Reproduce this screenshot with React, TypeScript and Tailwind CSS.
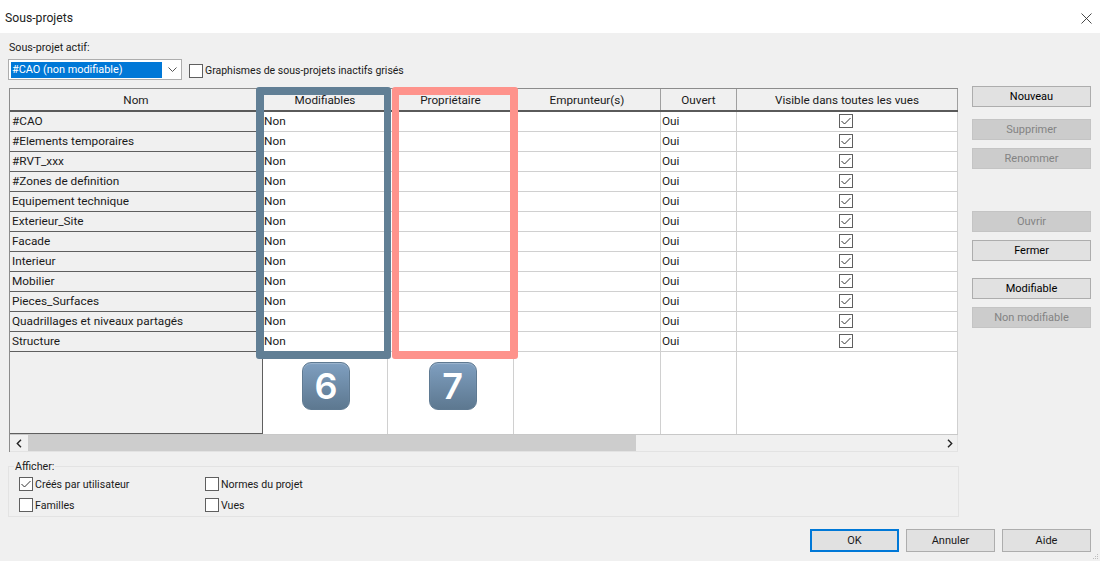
const rows = [
  "#CAO",
  "#Elements temporaires",
  "#RVT_xxx",
  "#Zones de definition",
  "Equipement technique",
  "Exterieur_Site",
  "Facade",
  "Interieur",
  "Mobilier",
  "Pieces_Surfaces",
  "Quadrillages et niveaux partagés",
  "Structure",
]

const headers = ["Nom", "Modifiables", "Propriétaire", "Emprunteur(s)", "Ouvert", "Visible dans toutes les vues"]
const gridCols = "grid grid-cols-[253px_125px_126px_147px_76px_221px] grid-rows-1"

function Check({ checked }: { checked?: boolean }) {
  return (
    <span className="flex h-[14px] w-[14px] shrink-0 items-center justify-center border border-[#5f5f5f] bg-white">
      {checked && (
        <svg width="10" height="10" viewBox="0 0 10 10" fill="none" stroke="#333" strokeWidth="1">
          <path d="M0.5 5 L3.5 8 L9.5 2" />
        </svg>
      )}
    </span>
  )
}

function SideButton({ label, disabled, className = "" }: { label: string; disabled?: boolean; className?: string }) {
  return (
    <div
      className={`flex h-[21px] items-center justify-center border text-[11px] ${
        disabled ? "border-[#c4c4c4] bg-[#cccccc] text-[#838383]" : "border-[#adadad] bg-[#e1e1e1] text-black"
      } ${className}`}
    >
      {label}
    </div>
  )
}

function Keycap({ n, className = "" }: { n: string; className?: string }) {
  return (
    <div
      className={`flex h-[48px] w-[48px] items-center justify-center rounded-[9px] border border-[#5f7a92] bg-gradient-to-b from-[#7f9fc0] to-[#5d7890] font-['Inter',sans-serif] text-[36px] leading-none font-semibold text-white shadow-[inset_0_1px_1px_rgba(255,255,255,0.25)] ${className}`}
    >
      {n}
    </div>
  )
}

export default function App() {
  return (
    <div className="relative flex h-[561px] w-[1100px] flex-col overflow-hidden bg-[#f0f0f0] font-['Roboto',sans-serif] text-[12px] leading-[15px] text-[#1a1a1a]">
      <div className="flex h-[33px] shrink-0 items-center justify-between bg-white pt-[4px] pr-[8px] pl-[5px]">
        <span className="text-[12.2px] text-[#222]">Sous-projets</span>
        <svg width="11" height="11" viewBox="0 0 11 11" stroke="#333" strokeWidth="0.9">
          <path d="M0.5 0.5 L10.5 10.5 M10.5 0.5 L0.5 10.5" />
        </svg>
      </div>

      <div className="flex-1">
        <div className="flex pt-[5px] pl-[9px]">
          <div className="w-[949px]">
            <div className="h-[18px] pt-px text-[10.7px] leading-[18px]">Sous-projet actif:</div>
            <div className="mt-[3px] flex h-[21px] items-center">
              <div className="-ml-px flex h-[21px] w-[174px] items-center border border-[#adadad] bg-white pl-[2px]">
                <div className="flex h-[16px] w-[151px] items-center bg-[#0078d7] pl-[1px] text-[10.9px] text-white">
                  #CAO (non modifiable)
                </div>
                <svg className="ml-[6px]" width="9" height="6" viewBox="0 0 9 6" fill="none" stroke="#555">
                  <path d="M0.5 0.5 L4.5 4.5 L8.5 0.5" />
                </svg>
              </div>
              <div className="ml-[7px] flex items-center gap-[2px] pt-[2px]">
                <Check />
                <span className="text-[10.5px]">Graphismes de sous-projets inactifs grisés</span>
              </div>
            </div>

            <div className="relative mt-[8px] w-[949px] border-t border-l border-[#8c8c8c]">
              <div className={`${gridCols} h-[23px] border-b-2 border-[#5a5a5a] bg-[#f0f0f0]`}>
                {headers.map((h) => (
                  <div key={h} className="flex items-center justify-center border-r border-[#a0a0a0] pt-[2px] text-[11.7px]">
                    {h}
                  </div>
                ))}
              </div>
              {rows.map((r) => (
                <div key={r} className={`${gridCols} h-[20px]`}>
                  <div className="flex items-center border-r border-b border-[#5f5f5f] bg-[#f0f0f0] pl-[2px] text-[11.8px]">
                    {r}
                  </div>
                  <div className="flex items-center border-r border-b border-[#d0d0d0] bg-white pl-[1px] text-[11.8px]">Non</div>
                  <div className="border-r border-b border-[#d0d0d0] bg-white" />
                  <div className="border-r border-b border-[#d0d0d0] bg-white" />
                  <div className="flex items-center border-r border-b border-[#d0d0d0] bg-white pl-[1px] text-[11.8px]">Oui</div>
                  <div className="flex items-center justify-center border-r border-b border-[#d0d0d0] bg-white pr-[2px] pb-[1px]">
                    <Check checked />
                  </div>
                </div>
              ))}
              <div className={`${gridCols} h-[83px] border-b border-[#c8c8c8]`}>
                <div className="border-r border-b border-[#5f5f5f] bg-[#f0f0f0]" />
                <div className="flex items-start justify-center border-r border-[#d0d0d0] bg-white pt-[10px]">
                  <Keycap n="6" className="ml-[2px]" />
                </div>
                <div className="flex items-start justify-center border-r border-[#d0d0d0] bg-white pt-[10px]">
                  <Keycap n="7" className="ml-[4px]" />
                </div>
                <div className="border-r border-[#d0d0d0] bg-white" />
                <div className="border-r border-[#d0d0d0] bg-white" />
                <div className="border-r border-[#d0d0d0] bg-white" />
              </div>
              <div className="flex h-[17px] items-center border-r border-b border-[#e3e3e3]">
                <div className="flex w-[18px] justify-center">
                  <svg width="6" height="9" viewBox="0 0 6 9" fill="none" stroke="#222" strokeWidth="1.4">
                    <path d="M5 0.8 L1.3 4.5 L5 8.2" />
                  </svg>
                </div>
                <div className="h-full w-[608px] bg-[#cdcdcd]" />
                <div className="flex flex-1 justify-end pr-[4px]">
                  <svg width="6" height="9" viewBox="0 0 6 9" fill="none" stroke="#222" strokeWidth="1.4">
                    <path d="M1 0.8 L4.7 4.5 L1 8.2" />
                  </svg>
                </div>
              </div>

              <div className="absolute -top-[2px] left-[246px] h-[272px] w-[135px] rounded-[3px] border-[8px] border-r-[7px] border-[#617f95]" />
              <div className="absolute -top-[2px] left-[382px] h-[272px] w-[126px] rounded-[3px] border-[8px] border-l-[7px] border-[#fe938c]" />
            </div>

            <div className="relative mt-[14px] h-[51px] w-[951px] -translate-x-[1px] border border-[#e3e3e3] pt-[10px] pl-[10px]">
              <span className="absolute -top-[7px] left-[5px] bg-[#f0f0f0] px-px text-[10.7px] leading-[14px]">Afficher:</span>
              <div className="grid grid-cols-[186px_1fr] gap-y-[7px]">
                <div className="flex h-[14px] items-center gap-[2px]"><Check checked /><span className="text-[10.6px]">Créés par utilisateur</span></div>
                <div className="flex h-[14px] items-center gap-[2px]"><Check /><span className="text-[10.6px]">Normes du projet</span></div>
                <div className="flex h-[14px] items-center gap-[2px]"><Check /><span className="text-[10.6px]">Familles</span></div>
                <div className="flex h-[14px] items-center gap-[2px]"><Check /><span className="text-[10.6px]">Vues</span></div>
              </div>
            </div>
          </div>

          <div className="ml-[14px] flex w-[119px] flex-col pt-[48px]">
            <SideButton label="Nouveau" />
            <SideButton label="Supprimer" disabled className="mt-[12px]" />
            <SideButton label="Renommer" disabled className="mt-[8px]" />
            <SideButton label="Ouvrir" disabled className="mt-[42px]" />
            <SideButton label="Fermer" className="mt-[8px]" />
            <SideButton label="Modifiable" className="mt-[17px]" />
            <SideButton label="Non modifiable" disabled className="mt-[8px]" />
          </div>
        </div>

        <div className="mt-[12px] flex justify-end gap-[7px] pr-[9px]">
          <div className="flex h-[23px] w-[89px] items-center justify-center border-2 border-[#0078d7] bg-[#e1e1e1] text-[11px]">OK</div>
          <div className="flex h-[23px] w-[89px] items-center justify-center border border-[#adadad] bg-[#e1e1e1] text-[11px]">Annuler</div>
          <div className="flex h-[23px] w-[89px] items-center justify-center border border-[#adadad] bg-[#e1e1e1] text-[11px]">Aide</div>
        </div>
      </div>

      <svg className="absolute right-[1px] bottom-[1px]" width="6" height="6" viewBox="0 0 6 6" fill="#bdbdbd">
        <rect x="4" y="0" width="1" height="1" />
        <rect x="2" y="2" width="1" height="1" />
        <rect x="4" y="2" width="1" height="1" />
        <rect x="0" y="4" width="1" height="1" />
        <rect x="2" y="4" width="1" height="1" />
        <rect x="4" y="4" width="1" height="1" />
      </svg>
    </div>
  )
}
